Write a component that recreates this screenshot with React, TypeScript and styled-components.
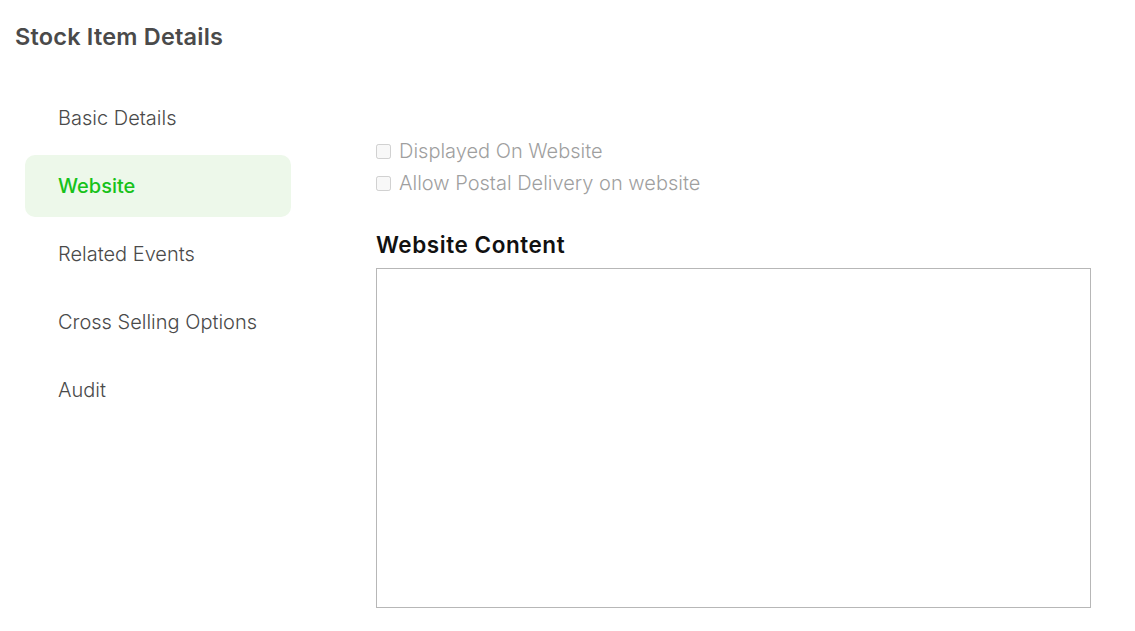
import React, { useState } from "react";
import styled, { createGlobalStyle } from "styled-components";

const GlobalStyle = createGlobalStyle`
  body {
    margin: 0;
    background: #ffffff;
    font-family: "Inter", "Lato", sans-serif;
  }
`;

const Page = styled.div`
  padding: 22px 15px 0 15px;
`;

const Title = styled.h1`
  margin: 0;
  font-size: 23.5px;
  line-height: 30px;
  font-weight: 600;
  letter-spacing: 0.2px;
  color: #4a4a4a;
`;

const Body = styled.div`
  display: flex;
  margin-top: 35px;
`;

const Sidebar = styled.nav`
  width: 266px;
  margin-left: 10px;
  display: flex;
  flex-direction: column;
  gap: 6px;
`;

const NavItem = styled.div<{ $active?: boolean }>`
  height: 62px;
  display: flex;
  align-items: center;
  padding-left: 33px;
  border-radius: 10px;
  font-size: 20px;
  font-weight: ${(p) => (p.$active ? 500 : 300)};
  color: ${(p) => (p.$active ? "#17c21a" : "#4a4a4a")};
  background: ${(p) => (p.$active ? "#edf8ea" : "transparent")};
  cursor: pointer;
`;

const Content = styled.section`
  margin-left: 85px;
  padding-top: 48px;
  width: 715px;
`;

const CheckRow = styled.label`
  display: flex;
  align-items: center;
  gap: 8px;
  height: 32px;
  font-size: 20px;
  font-weight: 300;
  color: #9f9f9f;
`;

const Box = styled.input`
  width: 15px;
  height: 15px;
  margin: 0;
  accent-color: #17c21a;
`;

const Heading = styled.h2`
  margin: 33px 0 10px;
  font-size: 22.5px;
  line-height: 26px;
  font-weight: 600;
  letter-spacing: 0.55px;
  color: #111111;
`;

const Editor = styled.textarea`
  display: block;
  box-sizing: border-box;
  width: 715px;
  height: 340px;
  border: 1px solid #b7b7b7;
  resize: none;
  outline: none;
  font-family: inherit;
  font-size: 16px;
`;

const tabs = [
  "Basic Details",
  "Website",
  "Related Events",
  "Cross Selling Options",
  "Audit",
];

export default function App() {
  const [active, setActive] = useState("Website");

  return (
    <Page>
      <GlobalStyle />
      <Title>Stock Item Details</Title>
      <Body>
        <Sidebar>
          {tabs.map((t) => (
            <NavItem key={t} $active={t === active} onClick={() => setActive(t)}>
              {t}
            </NavItem>
          ))}
        </Sidebar>
        <Content>
          <CheckRow>
            <Box type="checkbox" disabled />
            Displayed On Website
          </CheckRow>
          <CheckRow>
            <Box type="checkbox" disabled />
            Allow Postal Delivery on website
          </CheckRow>
          <Heading>Website Content</Heading>
          <Editor />
        </Content>
      </Body>
    </Page>
  );
}
